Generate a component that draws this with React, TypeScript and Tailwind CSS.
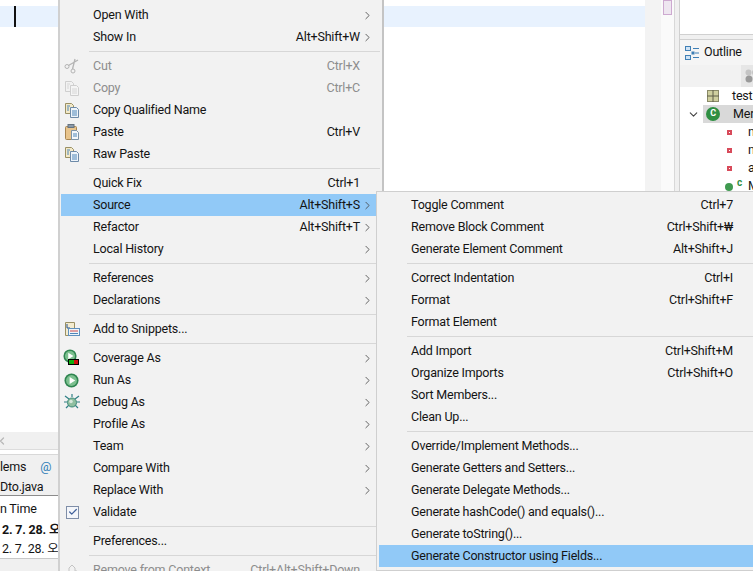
import React from "react";
import { ChevronRight, ChevronDown, ChevronLeft, Check } from "lucide-react";

type Row =
  | { sep: true }
  | {
      sep?: false;
      label: string;
      keys?: string;
      arrow?: boolean;
      disabled?: boolean;
      active?: boolean;
      icon?: React.ReactNode;
    };

const CopyIcon = ({ dim }: { dim?: boolean }) => (
  <svg width="16" height="16" viewBox="0 0 16 16">
    <path d="M1.5 1.5h6l2 2v8h-8z" fill={dim ? "#f2f2f2" : "#f3e9c8"} stroke={dim ? "#cfcfcf" : "#9a9064"} />
    <path d="M6.5 5.5h6l2 2v8h-8z" fill={dim ? "#f5f5f5" : "#eef4fa"} stroke={dim ? "#cfcfcf" : "#6d8aa8"} />
    <path d="M8 9h5M8 11h5M8 13h5" stroke={dim ? "#d6d6d6" : "#4f86b8"} />
    <path d="M3 4h3M3 6h2M3 8h2" stroke={dim ? "#d6d6d6" : "#4f86b8"} />
  </svg>
);

const ScissorsIcon = () => (
  <svg width="16" height="16" viewBox="0 0 16 16" fill="none" stroke="#b4b4b4">
    <circle cx="3" cy="8.5" r="2" />
    <circle cx="9" cy="13" r="2" />
    <path d="M4.5 7.5 14 2M8.5 11 11 1" strokeWidth="1.3" />
  </svg>
);

const PasteIcon = () => (
  <svg width="16" height="16" viewBox="0 0 16 16">
    <rect x="1.5" y="2.5" width="11" height="13" rx="1" fill="#e8c48c" stroke="#a98550" />
    <rect x="4" y="0.5" width="6" height="3" fill="#8a99a8" stroke="#66737f" />
    <path d="M7.5 6.5h5l2 2v7h-7z" fill="#f4f8fb" stroke="#7d94a8" />
    <path d="M9 10h4M9 12h4" stroke="#4f86b8" />
  </svg>
);

const SnippetIcon = () => (
  <svg width="16" height="16" viewBox="0 0 16 16">
    <path d="M1.5 1.5h9v13h-9z" fill="#f4ecd0" stroke="#9a9064" />
    <path d="M3 3v4h3" fill="none" stroke="#26508c" />
    <rect x="4.5" y="7.5" width="11" height="7" fill="#eef4fa" stroke="#5f90bd" />
    <path d="M6 10h8" stroke="#d04848" />
    <path d="M6 12.5h8" stroke="#4f86b8" />
  </svg>
);

const RunDisc = ({ size }: { size: number }) => (
  <svg width={size} height={size} viewBox="0 0 16 16">
    <circle cx="8" cy="8" r="7.5" fill="#2f8550" />
    <circle cx="8" cy="8" r="5.8" fill="#7cc08f" />
    <path d="M6 4.2 12 8l-6 3.8z" fill="#fff" />
  </svg>
);

const CoverageIcon = () => (
  <div className="relative h-4 w-4">
    <div className="absolute -left-[1px] -top-[1px]">
      <RunDisc size={14} />
    </div>
    <div className="absolute bottom-[1px] right-[1px] flex h-[6px] w-[11px] border border-black">
      <div className="w-1/2 bg-[#10b010]" />
      <div className="w-1/2 bg-[#d01010]" />
    </div>
  </div>
);

const BugIcon = () => (
  <svg width="16" height="16" viewBox="0 0 16 16" fill="none">
    <path d="M1 2l4 3M15 2l-4 3M0 8h3M13 8h3M2 14l3-3M14 14l-3-3M8 0v3" stroke="#2f7f86" strokeWidth="1.2" />
    <circle cx="8" cy="8.5" r="4.5" fill="#8fbfa0" stroke="#3c8a78" />
    <circle cx="7" cy="7.5" r="1.8" fill="#d7e8dc" />
  </svg>
);

const ValidateIcon = () => (
  <div className="ml-[2px] flex h-[13px] w-[13px] items-center justify-center border border-[#7f8ea8] bg-[#f4f6fa]">
    <Check size={10} strokeWidth={3} className="text-[#41619b]" />
  </div>
);

const RemoveIcon = () => (
  <svg width="16" height="16" viewBox="0 0 16 16" fill="none" stroke="#c4c4c4">
    <path d="M5 15V6l3-3 3 3v3h2v6z" />
  </svg>
);

const mainRows: Row[] = [
  { label: "Open With", arrow: true },
  { label: "Show In", keys: "Alt+Shift+W", arrow: true },
  { sep: true },
  { label: "Cut", keys: "Ctrl+X", disabled: true, icon: <ScissorsIcon /> },
  { label: "Copy", keys: "Ctrl+C", disabled: true, icon: <CopyIcon dim /> },
  { label: "Copy Qualified Name", icon: <CopyIcon /> },
  { label: "Paste", keys: "Ctrl+V", icon: <PasteIcon /> },
  { label: "Raw Paste", icon: <CopyIcon /> },
  { sep: true },
  { label: "Quick Fix", keys: "Ctrl+1" },
  { label: "Source", keys: "Alt+Shift+S", arrow: true, active: true },
  { label: "Refactor", keys: "Alt+Shift+T", arrow: true },
  { label: "Local History", arrow: true },
  { sep: true },
  { label: "References", arrow: true },
  { label: "Declarations", arrow: true },
  { sep: true },
  { label: "Add to Snippets...", icon: <SnippetIcon /> },
  { sep: true },
  { label: "Coverage As", arrow: true, icon: <CoverageIcon /> },
  { label: "Run As", arrow: true, icon: <RunDisc size={15} /> },
  { label: "Debug As", arrow: true, icon: <BugIcon /> },
  { label: "Profile As", arrow: true },
  { label: "Team", arrow: true },
  { label: "Compare With", arrow: true },
  { label: "Replace With", arrow: true },
  { label: "Validate", icon: <ValidateIcon /> },
  { sep: true },
  { label: "Preferences..." },
  { sep: true },
  { label: "Remove from Context", keys: "Ctrl+Alt+Shift+Down", disabled: true, icon: <RemoveIcon /> },
];

const sourceRows: Row[] = [
  { label: "Toggle Comment", keys: "Ctrl+7" },
  { label: "Remove Block Comment", keys: "Ctrl+Shift+₩" },
  { label: "Generate Element Comment", keys: "Alt+Shift+J" },
  { sep: true },
  { label: "Correct Indentation", keys: "Ctrl+I" },
  { label: "Format", keys: "Ctrl+Shift+F" },
  { label: "Format Element" },
  { sep: true },
  { label: "Add Import", keys: "Ctrl+Shift+M" },
  { label: "Organize Imports", keys: "Ctrl+Shift+O" },
  { label: "Sort Members..." },
  { label: "Clean Up..." },
  { sep: true },
  { label: "Override/Implement Methods..." },
  { label: "Generate Getters and Setters..." },
  { label: "Generate Delegate Methods..." },
  { label: "Generate hashCode() and equals()..." },
  { label: "Generate toString()..." },
  { label: "Generate Constructor using Fields...", active: true },
];

const MenuRows = ({ rows }: { rows: Row[] }) => (
  <>
    {rows.map((row, i) =>
      row.sep ? (
        <div key={i} className="ml-[28px] flex h-[7px] items-center">
          <div className="h-px w-full bg-[#d7d7d7]" />
        </div>
      ) : (
        <div
          key={i}
          className={`flex h-[22px] items-center ${row.active ? "bg-[#91c9f7]" : ""} ${
            row.disabled ? "text-[#8d8d8d]" : "text-[#141414]"
          }`}
        >
          <div className="flex w-8 shrink-0 items-center pl-[3px]">{row.icon}</div>
          <span className="flex-1 whitespace-nowrap">{row.label}</span>
          {row.keys && <span className="whitespace-nowrap">{row.keys}</span>}
          <div className="flex w-[20px] shrink-0 justify-start pl-[1px]">
            {row.arrow && <ChevronRight size={13} strokeWidth={1.5} className="text-[#444]" />}
          </div>
        </div>
      ),
    )}
  </>
);

const FieldRow = ({ name }: { name: string }) => (
  <div className="flex h-[18px] items-center pl-[47px]">
    <div className="flex h-[5px] w-[5px] items-center justify-center bg-[#d84a5a]">
      <div className="h-px w-px bg-white" />
    </div>
    <span className="ml-[16px] text-[#141414]">{name}</span>
  </div>
);

export default function App() {
  return (
    <div
      className="relative flex h-[571px] w-[753px] overflow-hidden bg-white text-[12.5px] tracking-[-0.2px]"
      style={{ fontFamily: 'Roboto, "Noto Sans CJK KR", sans-serif' }}
    >
      {/* editor + bottom views */}
      <div className="flex w-[645px] shrink-0 flex-col">
        <div className="flex-1 pt-[6px]">
          <div className="h-[21px] bg-[#e8f2fe] pl-[14px]">
            <div className="h-full w-[2px] bg-[#111]" />
          </div>
        </div>
        <div className="flex h-[17px] items-center overflow-hidden bg-[#f0f0f0]">
          <ChevronLeft size={12} strokeWidth={2.5} className="-ml-[4px] text-[#b8b8b8]" />
        </div>
        <div className="h-[5px] border-t border-[#dcdcdc]" />
        <div className="flex h-[25px] items-center gap-[14px] border-t border-[#d8d8d8] bg-[#f0f0f0] text-[#141414]">
          <span>lems</span>
          <span className="text-[#2f7fb8]">@</span>
        </div>
        <div className="flex h-[17px] items-center border-b border-[#8c8c8c] bg-[#f0f0f0] text-[#141414]">
          Dto.java
        </div>
        <div className="h-[75px] text-[#141414]">
          <div className="flex h-[25px] items-center pt-[2px]">n Time</div>
          <div className="flex h-[19px] items-center pl-[2px] font-bold">2. 7. 28. 오</div>
          <div className="flex h-[18px] items-center pl-[2px]">2. 7. 28. 오</div>
          <div className="h-[13px] border-t border-[#c8c8c8] bg-[#f0f0f0]" />
        </div>
      </div>

      {/* overview ruler + scrollbar */}
      <div className="w-[16px] shrink-0 bg-[#f3f3f3]" />
      <div className="w-[13px] shrink-0 bg-[#fafafa] pl-[2px]">
        <div className="h-[15px] w-[9px] border border-[#cda9d0] bg-[#eee6f0]" />
      </div>
      <div className="w-[5px] shrink-0 border-l border-[#d8d8d8] bg-[#f0f0f0]" />

      {/* right views */}
      <div className="flex flex-1 flex-col border-l border-[#d0d0d0] bg-[#f0f0f0]">
        <div className="h-[35px] border-b border-[#d0d0d0] bg-white" />
        <div className="h-[4px]" />
        <div className="flex-1 border-t border-[#d0d0d0] bg-white">
          <div className="flex h-[25px] items-center gap-[5px] bg-[#f5f5f5] pl-[5px] text-[#141414]">
            <svg width="14" height="15" viewBox="0 0 14 15" fill="none" stroke="#3f7fb5" className="mt-[2px]">
              <rect x="0.5" y="0.5" width="5" height="4" fill="#cfe3f5" />
              <rect x="0.5" y="9.5" width="5" height="4" fill="#cfe3f5" />
              <path d="M8 2.5h6M8 11.5h6M10 7h4" />
              <rect x="7" y="6" width="2" height="2" fill="#3f7fb5" />
            </svg>
            <span>Outline</span>
          </div>
          <div className="flex h-[22px] justify-end bg-[#f2f2f2]">
            <div className="flex w-[18px] items-center bg-[#e6e6e6] pl-[4px]">
              <svg width="14" height="14" viewBox="0 0 14 14">
                <circle cx="3.5" cy="3.5" r="3" fill="#c4c4c4" />
                <circle cx="10" cy="3.5" r="3" fill="#c4c4c4" />
                <circle cx="4" cy="10" r="3.5" fill="#9a9a9a" />
              </svg>
            </div>
          </div>
          <div className="flex h-[18px] items-center pl-[27px]">
            <svg width="12" height="12" viewBox="0 0 12 12">
              <rect x="0.5" y="0.5" width="11" height="11" fill="#cfcf9f" stroke="#8a8a68" />
              <path d="M6 0v12M0 6h12" stroke="#5f5f48" />
            </svg>
            <span className="ml-[13px] text-[#141414]">test.</span>
          </div>
          <div className="flex h-[18px] items-center pl-[7px]">
            <ChevronDown size={13} strokeWidth={2} className="text-[#444]" />
            <div className="ml-[3px] flex h-full flex-1 items-center bg-[#d9d9d9] pl-[3px]">
              <div className="flex h-[14px] w-[14px] items-center justify-center rounded-full bg-[#2f8f42] text-[9px] font-bold text-white">
                C
              </div>
              <span className="ml-[13px] text-[#141414]">Mer</span>
            </div>
          </div>
          <FieldRow name="n" />
          <FieldRow name="n" />
          <FieldRow name="a" />
          <div className="flex h-[18px] items-center pl-[45px]">
            <div className="mt-[2px] h-[8px] w-[8px] rounded-full bg-[#3f9a50]" />
            <span className="mb-[8px] ml-[4px] text-[10px] font-bold text-[#2f8f42]">c</span>
            <span className="ml-[6px] text-[#141414]">M</span>
          </div>
        </div>
      </div>

      {/* context menu */}
      <div className="absolute left-[58px] top-0 h-[571px] w-[326px] border-x-2 border-r-[#c4c4c4] border-l-[#d0d0d0] bg-[#f2f2f2] pt-[4px] pl-[1px] pr-[2px]">
        <MenuRows rows={mainRows} />
      </div>

      {/* source submenu */}
      <div className="absolute left-[376px] top-[191px] h-[380px] w-[378px] border border-[#cfcfcf] bg-[#f2f2f2] pt-[2px] pl-[2px]">
        <MenuRows rows={sourceRows} />
      </div>
    </div>
  );
}
